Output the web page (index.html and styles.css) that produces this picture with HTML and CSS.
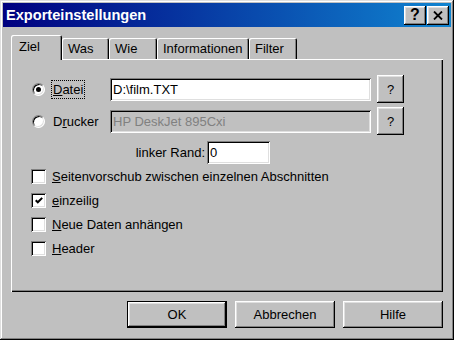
FILE: index.html
```html
<!DOCTYPE html>
<html>
<head>
<meta charset="utf-8">
<link rel="stylesheet" href="styles.css">
</head>
<body>
<div class="window">
  <div class="titlebar">
    <span class="title">Exporteinstellungen</span>
    <div class="tbtns">
      <div class="tbtn help">?</div>
      <div class="tbtn close"><svg width="10" height="9" viewBox="0 0 10 9"><path d="M1 0.5L9 8.5M9 0.5L1 8.5" stroke="#000" stroke-width="1.8" fill="none"/></svg></div>
    </div>
  </div>
  <div class="client">
    <div class="tabs">
      <div class="tab sel w-ziel">Ziel</div>
      <div class="tab w-was">Was</div>
      <div class="tab w-wie">Wie</div>
      <div class="tab w-info">Informationen</div>
      <div class="tab w-filter">Filter</div>
    </div>
    <div class="panel">
      <div class="row">
        <div class="opt"><span class="radio on"></span><span class="lbl focus"><u>D</u>atei</span></div>
        <div class="field">D:\film.TXT</div>
        <div class="qbtn">?</div>
      </div>
      <div class="row">
        <div class="opt"><span class="radio"></span><span class="lbl">D<u>r</u>ucker</span></div>
        <div class="field dis">HP DeskJet 895Cxi</div>
        <div class="qbtn">?</div>
      </div>
      <div class="rand">
        <span class="rand-lbl">linker Rand:</span>
        <div class="field small">0</div>
      </div>
      <div class="checks">
        <div class="cb-row"><span class="cb"></span><span class="cb-lbl"><u>S</u>eitenvorschub zwischen einzelnen Abschnitten</span></div>
        <div class="cb-row"><span class="cb"><svg width="8" height="7" viewBox="0 0 8 7"><path d="M0.7 3.2L2.8 5.3L7.2 0.9" stroke="#000" stroke-width="2" fill="none"/></svg></span><span class="cb-lbl"><u>e</u>inzeilig</span></div>
        <div class="cb-row"><span class="cb"></span><span class="cb-lbl"><u>N</u>eue Daten anhängen</span></div>
        <div class="cb-row"><span class="cb"></span><span class="cb-lbl"><u>H</u>eader</span></div>
      </div>
    </div>
    <div class="actions">
      <div class="pbtn default">OK</div>
      <div class="pbtn">Abbrechen</div>
      <div class="pbtn">Hilfe</div>
    </div>
  </div>
</div>
</body>
</html>
```
FILE: styles.css
```css
* { box-sizing: border-box; }
body {
  margin: 0;
  font-family: "Liberation Sans", Arial, sans-serif;
  font-size: 13px;
  color: #000;
  background: #c0c0c0;
}
.window {
  width: 454px;
  height: 340px;
  background: #c0c0c0;
  padding: 3px;
  display: flex;
  flex-direction: column;
  box-shadow: inset -1px -1px #000, inset 1px 1px #dfdfdf, inset -2px -2px #808080, inset 2px 2px #fff;
}
.titlebar {
  height: 24px;
  flex: none;
  background: linear-gradient(to right, #000080, #1084d0);
  display: flex;
  align-items: center;
  justify-content: space-between;
  padding-left: 3px;
  padding-right: 2px;
}
.title {
  color: #fff;
  font-weight: bold;
  font-size: 14.6px;
}
.tbtns { display: flex; gap: 1px; }
.tbtn {
  width: 22px;
  height: 19px;
  background: #c0c0c0;
  box-shadow: inset -1px -1px #000, inset 1px 1px #fff, inset -2px -2px #808080, inset 2px 2px #dfdfdf;
  display: flex;
  align-items: center;
  justify-content: center;
  font-weight: bold;
  font-size: 16px;
}
.client {
  flex: 1;
  padding: 8px 8px 9px;
  display: flex;
  flex-direction: column;
}
.tabs {
  display: flex;
  align-items: flex-end;
  height: 24px;
  flex: none;
  position: relative;
  z-index: 1;
}
.tab {
  height: 21px;
  padding: 3px 0 0 6px;
  background: #c0c0c0;
  border-radius: 2px 2px 0 0;
  box-shadow: inset 1px 1px #fff, inset -1px 0 #000, inset -2px 0 #808080;
}
.tab.sel {
  height: 25px;
  margin-bottom: -1px;
  padding: 4px 0 0 8px;
}
.w-ziel { width: 51px; }
.w-was { width: 47px; }
.w-wie { width: 48px; }
.w-info { width: 92px; }
.w-filter { width: 48px; }
.panel {
  flex: 1;
  padding: 16px 0 0 21px;
  box-shadow: inset 1px 1px #fff, inset -1px -1px #000, inset -2px -2px #808080;
}
.row {
  display: flex;
  align-items: center;
  height: 28px;
}
.row + .row { margin-top: 4px; }
.opt {
  width: 78px;
  display: flex;
  align-items: center;
}
.radio {
  width: 13px;
  height: 13px;
  flex: none;
  border-radius: 50%;
  background: #fff;
  border: 1px solid;
  border-color: #808080 #fff #fff #808080;
  box-shadow: inset 1px 1px #000, inset -1px -1px #dfdfdf;
  display: flex;
  align-items: center;
  justify-content: center;
}
.radio.on::after {
  content: "";
  width: 5px;
  height: 5px;
  border-radius: 50%;
  background: #000;
}
.lbl {
  margin-left: 6px;
  padding: 1px 1px;
  border: 1px dotted transparent;
}
.lbl.focus { border-color: #000; }
.field {
  width: 261px;
  height: 23px;
  background: #fff;
  box-shadow: inset 1px 1px #808080, inset -1px -1px #fff, inset 2px 2px #000, inset -2px -2px #dfdfdf;
  padding: 0 3px;
  display: flex;
  align-items: center;
}
.field.dis {
  background: #c0c0c0;
  color: #808080;
}
.field.small { width: 63px; }
.qbtn {
  width: 27px;
  height: 28px;
  margin-left: 6px;
  display: flex;
  align-items: center;
  justify-content: center;
  box-shadow: inset -1px -1px #000, inset 1px 1px #fff, inset -2px -2px #808080, inset 2px 2px #dfdfdf;
}
.rand {
  display: flex;
  align-items: center;
  margin-top: 6px;
}
.rand-lbl {
  width: 173px;
  margin-right: 2px;
  text-align: right;
}
.checks {
  display: flex;
  flex-direction: column;
  gap: 8px;
  margin-top: 4px;
}
.cb-row {
  display: flex;
  align-items: center;
  height: 16px;
}
.cb {
  width: 15px;
  height: 15px;
  flex: none;
  margin-left: -1px;
  background: #fff;
  box-shadow: inset 1px 1px #808080, inset -1px -1px #fff, inset 2px 2px #000, inset -2px -2px #dfdfdf;
  display: flex;
  align-items: center;
  justify-content: center;
}
.cb svg { display: block; }
.cb-lbl { margin-left: 6px; }
.actions {
  display: flex;
  justify-content: flex-end;
  gap: 8px;
  margin-top: 9px;
  flex: none;
}
.pbtn {
  width: 100px;
  height: 27px;
  display: flex;
  align-items: center;
  justify-content: center;
  box-shadow: inset -1px -1px #000, inset 1px 1px #fff, inset -2px -2px #808080, inset 2px 2px #dfdfdf;
}
.pbtn.default {
  box-shadow: inset 0 0 0 1px #000, inset -2px -2px #000, inset 2px 2px #fff, inset -3px -3px #808080, inset 3px 3px #dfdfdf;
}
```
